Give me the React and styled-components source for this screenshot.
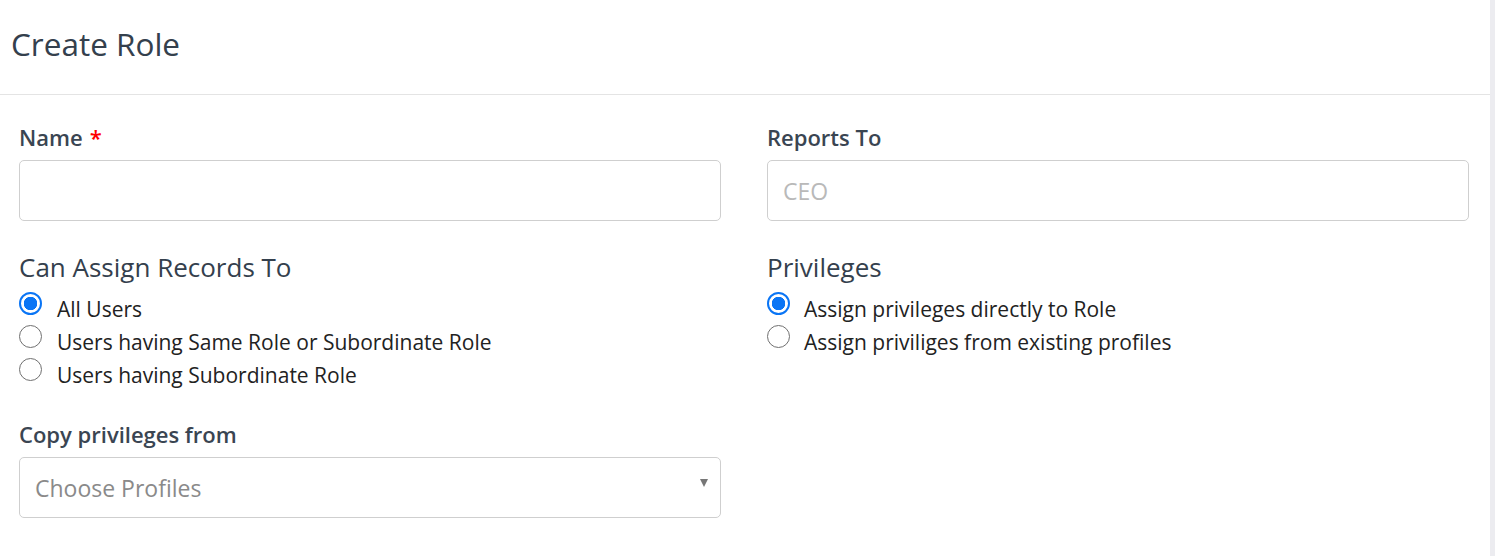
import React from "react";
import styled, { createGlobalStyle } from "styled-components";

const GlobalStyle = createGlobalStyle`
  html, body {
    margin: 0;
    padding: 0;
    background: #ffffff;
  }
  body {
    font-family: "Open Sans", "Liberation Sans", sans-serif;
  }
`;

export const Page = styled.div`
  display: flex;
  width: 1495px;
  height: 556px;
  overflow: hidden;
`;

export const Main = styled.div`
  flex: 1;
  display: flex;
  flex-direction: column;
`;

export const ScrollTrack = styled.div`
  width: 5px;
  background: #ececf0;
`;

export const Header = styled.div`
  height: 95px;
  border-bottom: 1px solid #e4e4e4;
  box-sizing: border-box;
  padding: 23px 11px 0;
`;

export const Title = styled.h1`
  margin: 0;
  font-size: 31.5px;
  font-weight: 400;
  line-height: 42px;
  color: #34404d;
`;

export const Body = styled.div`
  display: grid;
  grid-template-columns: 702px 702px;
  column-gap: 46px;
  padding: 28px 19px 0;
`;

export const Column = styled.div`
  display: flex;
  flex-direction: column;
`;

export const Label = styled.label`
  font-size: 22px;
  font-weight: 600;
  line-height: 28px;
  color: #3a4552;
  margin-top: ${props => props.gap || 0}px;
  margin-bottom: ${props => props.below || 9}px;

  span {
    color: #f00;
    margin-left: 7px;
  }
`;

export const TextBox = styled.div`
  height: 61px;
  box-sizing: border-box;
  border: 1px solid #cfcfcf;
  border-radius: 5px;
  padding: 0 15px;
  display: flex;
  align-items: center;
  justify-content: space-between;
  font-size: 23px;
  color: ${props => props.muted || "#333"};
`;

export const Caret = styled.span`
  width: 0;
  height: 0;
  border-left: 4.5px solid transparent;
  border-right: 4.5px solid transparent;
  border-top: 8px solid #777;
  margin-right: -3px;
  margin-top: -10px;
`;

export const Heading = styled.div`
  margin-top: 30px;
  margin-bottom: 10px;
  font-size: 26px;
  font-weight: 400;
  line-height: 32px;
  color: #34404d;
`;

export const Option = styled.div`
  display: flex;
  align-items: flex-start;
  height: 33px;
  font-size: 21px;
  line-height: 33px;
  color: #222;
`;

export const Radio = styled.span`
  width: 23px;
  height: 23px;
  box-sizing: border-box;
  border-radius: 50%;
  margin-top: -1px;
  margin-right: ${props => props.spacing || 15}px;
  flex: none;
  border: ${props => (props.checked ? "2px solid #0a75f5" : "1.7px solid #707070")};
  background: ${props =>
    props.checked
      ? "radial-gradient(circle, #0a75f5 0 6.5px, #fff 7px)"
      : "#fff"};
`;

function RadioGroup({ options, selected, spacing }) {
  return options.map((text, i) => (
    <Option key={text}>
      <Radio checked={i === selected} spacing={spacing} />
      {text}
    </Option>
  ));
}

export default function App() {
  return (
    <>
      <GlobalStyle />
      <Page>
        <Main>
          <Header>
            <Title>Create Role</Title>
          </Header>
          <Body>
            <Column>
              <Label>
                Name<span>*</span>
              </Label>
              <TextBox />
              <Heading>Can Assign Records To</Heading>
              <RadioGroup
                selected={0}
                options={[
                  "All Users",
                  "Users having Same Role or Subordinate Role",
                  "Users having Subordinate Role",
                ]}
              />
              <Label gap={28} below={9}>Copy privileges from</Label>
              <TextBox muted="#8a8a8a">
                Choose Profiles
                <Caret />
              </TextBox>
            </Column>
            <Column>
              <Label>Reports To</Label>
              <TextBox muted="#b9b9b9">CEO</TextBox>
              <Heading>Privileges</Heading>
              <RadioGroup
                selected={0}
                spacing={14}
                options={[
                  "Assign privileges directly to Role",
                  "Assign priviliges from existing profiles",
                ]}
              />
            </Column>
          </Body>
        </Main>
        <ScrollTrack />
      </Page>
    </>
  );
}
